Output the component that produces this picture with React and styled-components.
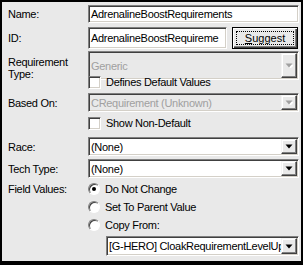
import React from "react"
import styled, { createGlobalStyle } from "styled-components"

const GlobalStyle = createGlobalStyle`
  html, body {
    margin: 0;
    padding: 0;
    background: #e9e9e9;
  }
  body {
    font-family: "Liberation Sans", Arial, sans-serif;
    font-size: 11px;
    letter-spacing: -0.3px;
    color: #000;
  }
`

const Frame = styled.div`
  width: 303px;
  height: 265px;
  box-sizing: border-box;
  border: 2px solid #000;
  border-bottom-width: 4px;
  background: #e9e9e9;
  padding: 3px 2px 0 6px;
  display: flex;
  flex-direction: column;
  overflow: hidden;
`

const Row = styled.div`
  display: grid;
  grid-template-columns: 80px minmax(0, 1fr);
  align-items: center;
  height: ${p => p.h}px;
  margin-top: ${p => p.mt || 0}px;
`

const Label = styled.div`
  line-height: 12px;
  white-space: nowrap;
  align-self: ${p => (p.top ? "start" : "center")};
  margin-top: ${p => p.offset || 0}px;
`

const sunken = `
  box-sizing: border-box;
  border: 1px solid;
  border-color: #808080 #fff #fff #808080;
  box-shadow: inset 1px 1px #404040, inset -1px -1px #d4d0c8;
`

const TextField = styled.div`
  ${sunken}
  height: 100%;
  flex: 1;
  min-width: 0;
  background: #fff;
  padding: 0 2px;
  display: flex;
  align-items: center;
  overflow: hidden;
  white-space: nowrap;
`

const Inline = styled.div`
  display: flex;
  align-items: stretch;
  gap: 5px;
  height: 100%;
`

const DefaultButton = styled.div`
  box-sizing: border-box;
  width: 66px;
  margin-right: 1px;
  height: 100%;
  border: 1px solid #000;
  box-shadow: inset 1px 1px #fff, inset -1px -1px #404040, inset -2px -2px #808080;
  background: #e9e9e9;
  padding: 3px;
  display: flex;
`

const FocusRect = styled.div`
  flex: 1;
  border: 1px dotted #000;
  display: flex;
  align-items: center;
  justify-content: center;
  letter-spacing: 0;
  u {
    text-decoration: underline;
  }
`

const Combo = styled.div`
  ${sunken}
  height: 100%;
  min-width: 0;
  margin-left: ${p => p.indent || 0}px;
  background: ${p => (p.disabled ? "#e9e9e9" : "#fff")};
  color: ${p => (p.disabled ? "#a0a0a0" : "#000")};
  padding: 1px;
  display: flex;
  align-items: stretch;
`

const ComboText = styled.div`
  flex: 1;
  min-width: 0;
  padding-left: 1px;
  display: flex;
  align-items: center;
  overflow: hidden;
  white-space: nowrap;
`

const ArrowButton = styled.div`
  box-sizing: border-box;
  width: 16px;
  flex: none;
  background: #e9e9e9;
  border: 1px solid;
  border-color: #f4f4f4 #404040 #404040 #f4f4f4;
  box-shadow: inset -1px -1px #808080, inset 1px 1px #fff;
  display: flex;
  align-items: center;
  justify-content: center;
`

const Check = styled.div`
  display: flex;
  align-items: center;
  gap: 5px;
  height: 100%;
`

const CheckBox = styled.span`
  ${sunken}
  width: 13px;
  height: 13px;
  background: #fff;
  flex: none;
`

const RadioDot = styled.span`
  box-sizing: border-box;
  width: 12px;
  height: 12px;
  flex: none;
  border-radius: 50%;
  border: 1px solid;
  border-color: #808080 #fff #fff #808080;
  background: #fff;
  box-shadow: inset 1px 1px #404040;
  position: relative;
  &::after {
    content: "";
    display: ${p => (p.checked ? "block" : "none")};
    position: absolute;
    left: 3px;
    top: 3px;
    width: 4px;
    height: 4px;
    border-radius: 50%;
    background: #000;
  }
`

const Arrow = ({ disabled }) => (
  <svg width="8" height="5" viewBox="0 0 8 5">
    {disabled && <path d="M2 2 H9 L5.5 5.5 Z" fill="#fff" />}
    <path d="M0.5 0.5 H7.5 L4 4.5 Z" fill={disabled ? "#a0a0a0" : "#000"} />
  </svg>
)

const Dropdown = ({ children, disabled, indent }) => (
  <Combo disabled={disabled} indent={indent}>
    <ComboText>{children}</ComboText>
    <ArrowButton>
      <Arrow disabled={disabled} />
    </ArrowButton>
  </Combo>
)

const Radio = ({ checked, children }) => (
  <Check>
    <RadioDot checked={checked} />
    <span>{children}</span>
  </Check>
)

export default function App() {
  return (
    <>
      <GlobalStyle />
      <Frame>
        <Row h={18}>
          <Label>Name:</Label>
          <TextField>AdrenalineBoostRequirements</TextField>
        </Row>
        <Row h={18} mt={4}>
          <Label>ID:</Label>
          <Inline>
            <TextField>AdrenalineBoostRequireme</TextField>
            <DefaultButton>
              <FocusRect>
                <span>
                  <u>S</u>uggest
                </span>
              </FocusRect>
            </DefaultButton>
          </Inline>
        </Row>
        <Row h={19} mt={6}>
          <Label top offset={5}>
            Requirement
            <br />
            Type:
          </Label>
          <Dropdown disabled>Generic</Dropdown>
        </Row>
        <Row h={14} mt={5}>
          <span />
          <Check>
            <CheckBox />
            <span>Defines Default Values</span>
          </Check>
        </Row>
        <Row h={19} mt={4}>
          <Label>Based On:</Label>
          <Dropdown disabled>CRequirement (Unknown)</Dropdown>
        </Row>
        <Row h={14} mt={4}>
          <span />
          <Check>
            <CheckBox />
            <span>Show Non-Default</span>
          </Check>
        </Row>
        <Row h={19} mt={7}>
          <Label>Race:</Label>
          <Dropdown>(None)</Dropdown>
        </Row>
        <Row h={19} mt={3}>
          <Label>Tech Type:</Label>
          <Dropdown>(None)</Dropdown>
        </Row>
        <Row h={18} mt={2}>
          <Label>Field Values:</Label>
          <Radio checked>Do Not Change</Radio>
        </Row>
        <Row h={18}>
          <span />
          <Radio>Set To Parent Value</Radio>
        </Row>
        <Row h={18}>
          <span />
          <Radio>Copy From:</Radio>
        </Row>
        <Row h={20} mt={2}>
          <span />
          <Dropdown indent={18}>[G-HERO] CloakRequirementLevelUp</Dropdown>
        </Row>
      </Frame>
    </>
  )
}
